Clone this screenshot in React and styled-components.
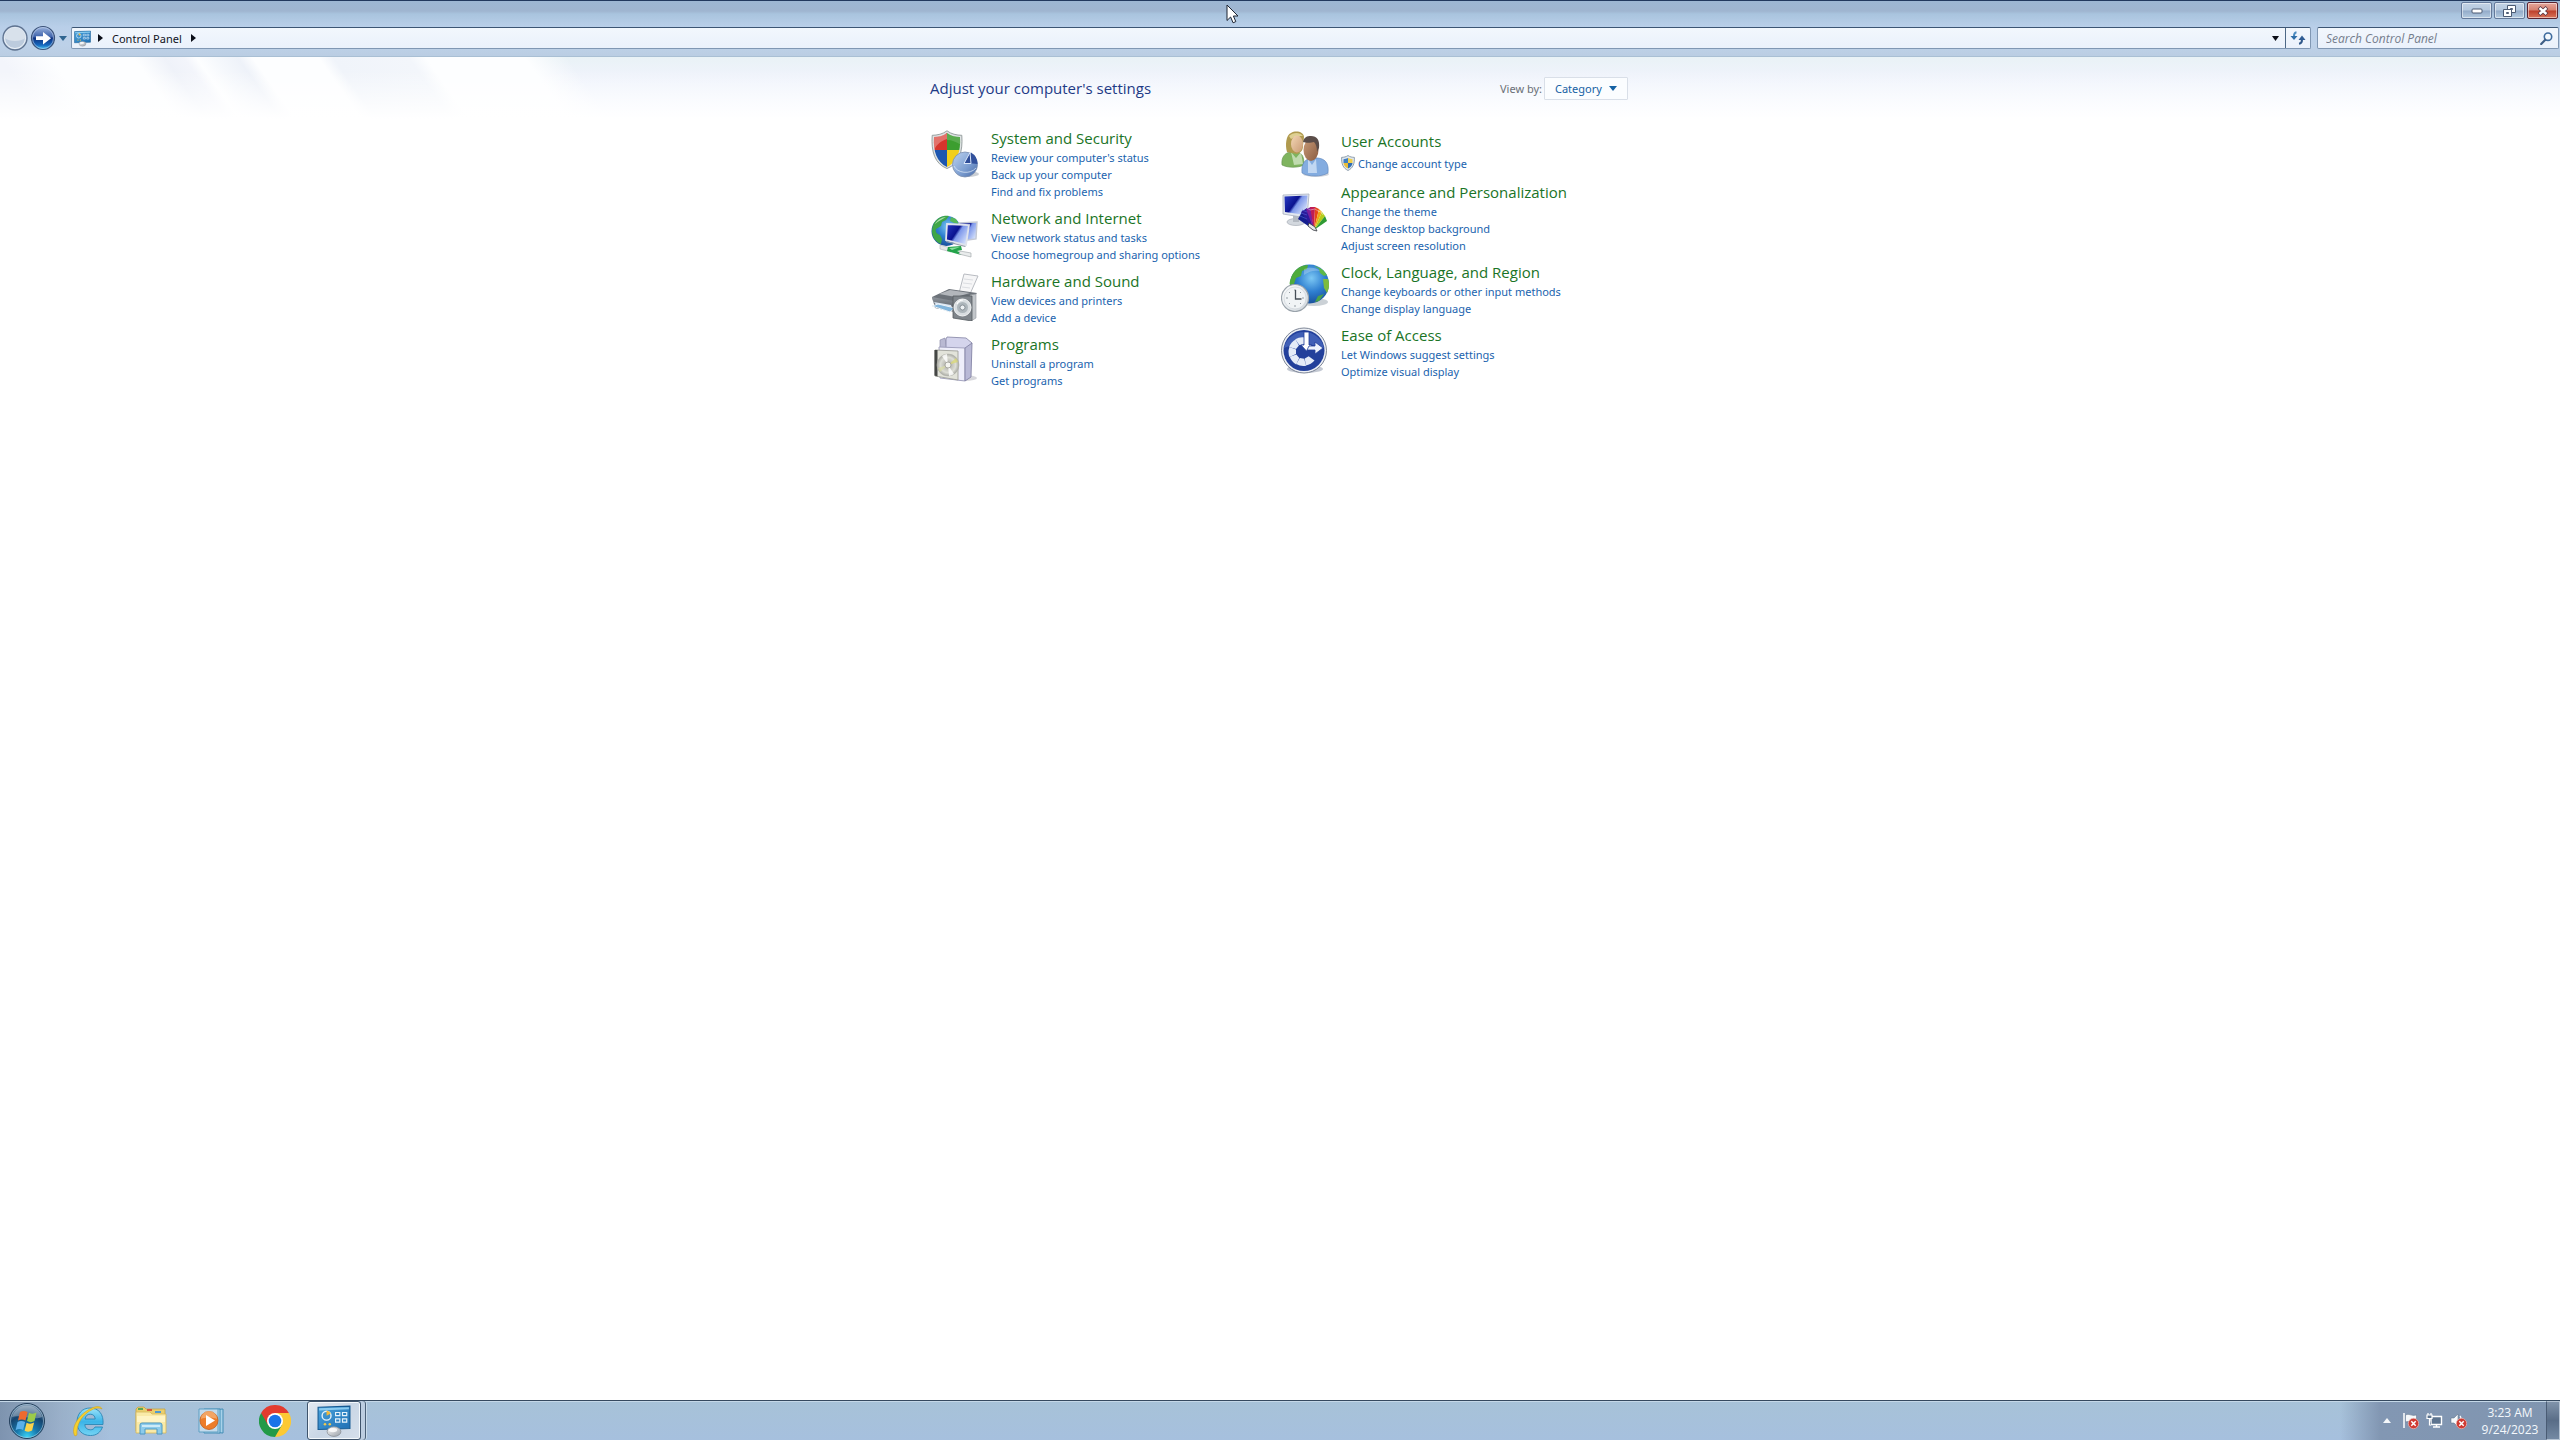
import React from "react";
import styled, { createGlobalStyle, css } from "styled-components";

const GlobalStyle = createGlobalStyle`
  *, *::before, *::after {
    box-sizing: border-box;
  }

  body {
    margin: 0;
    background: #ffffff;
    font-family: "Noto Sans", "Open Sans", sans-serif;
    font-size: 11px;
    line-height: 17px;
  }

  svg {
    display: block;
    flex: none;
  }

  button, input, select {
    font: inherit;
    margin: 0;
  }
`;

const Desktop = styled.div`
  min-height: 100vh;
  display: flex;
  flex-direction: column;
`;

/* window frame */

const Frame = styled.header`
  border-top: 1px solid #22395e;
  border-bottom: 1px solid #a9bfd4;
  background: linear-gradient(
    to bottom,
    #9db7d3 0,
    #9fb5d0 10px,
    #a9c4de 13px,
    #b9cfe9 26px,
    #bdd1e8 44px,
    #bacde2 56px
  );
`;

const CaptionBar = styled.div`
  display: flex;
  justify-content: flex-end;
  gap: 2px;
  padding: 1px 2px 0;
  height: 25px;
`;

const CaptionButton = styled.button`
  width: 31px;
  height: 17px;
  padding: 0;
  display: flex;
  align-items: center;
  justify-content: center;
  border: 1px solid #64799a;
  border-radius: 2px;
  box-shadow: inset 0 0 0 1px rgba(255, 255, 255, 0.5);
  background: linear-gradient(to bottom, #c3d3e5 0%, #b4c8de 48%, #93abc9 52%, #b4cbe0 100%);

  ${(p) =>
    p.$close &&
    css`
      border-color: #5b2330;
      background: linear-gradient(to bottom, #e5a69b 0%, #d5806f 48%, #bd3f2b 52%, #d9745a 100%);
    `}
`;

const NavRow = styled.div`
  display: flex;
  align-items: center;
  padding: 0 1px 6px 2px;
  height: 30px;
`;

const RoundButton = styled.button`
  padding: 0;
  border: 0;
  background: none;
  margin-right: ${(p) => p.$gap || 0}px;
`;

const AddressBar = styled.nav`
  flex: 1;
  height: 22px;
  display: flex;
  align-items: center;
  margin-right: 6px;
  border: 1px solid #8097b3;
  border-top-color: #3c5573;
  border-radius: 2px;
  background: linear-gradient(to bottom, #f2f7fd, #eaf1fb);
`;

const Crumb = styled.a`
  display: flex;
  align-items: center;
  margin: 0 9px;
  color: #10131c;
  text-decoration: none;
`;

const BarIcon = styled.span`
  padding: 0 7px 0 2px;
`;

const Spacer = styled.div`
  flex: 1;
`;

const BarButton = styled.button`
  width: ${(p) => p.$w}px;
  height: 20px;
  padding: 0;
  display: flex;
  align-items: center;
  justify-content: center;
  border: 0;
  border-left: ${(p) => (p.$divided ? "1px solid #4d6886" : "0")};
  background: none;
`;

const SearchBox = styled.label`
  width: 242px;
  height: 22px;
  display: flex;
  align-items: center;
  padding: 0 5px 0 8px;
  border: 1px solid #8097b3;
  border-top-color: #3c5573;
  border-radius: 2px;
  background: linear-gradient(to bottom, #f2f7fd, #eaf1fb);
`;

const SearchInput = styled.input`
  flex: 1;
  min-width: 0;
  padding: 0;
  border: 0;
  outline: 0;
  background: none;
  font-family: "Open Sans", "Noto Sans", sans-serif;
  font-size: 12px;

  &::placeholder {
    color: #757d8c;
    font-style: italic;
    opacity: 1;
  }
`;

/* content */

const Content = styled.main`
  flex: 1;
  padding-top: 18px;
  background:
    linear-gradient(to bottom, transparent 0, transparent 14px, #ffffff 62px),
    linear-gradient(
      55deg,
      #f3f5fb 36px,
      #fdfeff 77px,
      #fdfeff 145px,
      #eff2f9 170px,
      #f3f5fb 186px,
      #fdfeff 196px,
      #f5f8fc 212px,
      #eef2f9 230px,
      #fdfeff 242px,
      #fdfeff 296px,
      #f0f4fa 308px,
      #f3f6fb 370px,
      #fdfeff 384px,
      #fdfeff 465px,
      rgba(253, 254, 255, 0) 500px
    ) 0 0 / 700px 62px no-repeat,
    linear-gradient(to bottom, #e9f2f6 0, #eff3fb 18px, #f4f8ff 62px);
`;

const Panel = styled.div`
  width: 100%;
  max-width: 700px;
  margin: 0 auto;
`;

const PanelHead = styled.div`
  display: flex;
  align-items: center;
  justify-content: space-between;
  height: 26px;
  margin-bottom: 27px;
  padding-right: 2px;
`;

const PanelTitle = styled.h1`
  margin: 0;
  font-family: "Open Sans", "Noto Sans", sans-serif;
  font-size: 15px;
  line-height: 22px;
  font-weight: 400;
  color: #1e3a86;
`;

const ViewBy = styled.label`
  display: flex;
  align-items: center;
  gap: 2px;
  color: #6a6f76;
`;

const SelectWrap = styled.span`
  position: relative;
  display: flex;
  align-items: center;

  svg {
    position: absolute;
    right: 11px;
    pointer-events: none;
  }
`;

const Select = styled.select`
  appearance: none;
  width: 84px;
  height: 23px;
  padding: 0 0 0 10px;
  border: 1px solid #d9dfe8;
  border-radius: 1px;
  background: #fbfdff;
  color: #1561a3;
`;

const Columns = styled.div`
  display: grid;
  grid-template-columns: 1fr 1fr;
`;

const Category = styled.section`
  display: flex;
  gap: 12px;
  padding: 0 0 ${(p) => (p.$shielded ? 4 : 8)}px 1px;
`;

const CategoryIcon = styled.div`
  padding-top: 2px;
`;

const CategoryBody = styled.div`
  padding-top: ${(p) => (p.$shielded ? 3 : 0)}px;
`;

const CategoryTitle = styled.h2`
  margin: 0;
  font-family: "Open Sans", "Noto Sans", sans-serif;
  font-size: 15px;
  line-height: 21px;
  font-weight: 400;
  white-space: nowrap;

  a {
    color: #1a7426;
    text-decoration: none;
  }
`;

const TaskList = styled.ul`
  margin: 0;
  padding: 0;
  list-style: none;
`;

const Task = styled.li`
  display: flex;
  align-items: center;
  gap: 3px;
  height: ${(p) => (p.$shielded ? 22 : 17)}px;
  white-space: nowrap;

  a {
    color: #1a63ae;
    text-decoration: none;
  }
`;

/* taskbar */

const Taskbar = styled.footer`
  height: 40px;
  display: flex;
  align-items: stretch;
  border-top: 1px solid #35495f;
  box-shadow: inset 0 1px 0 #c5d8e8;
  background:
    linear-gradient(to right, rgba(112, 132, 160, 0.75) 0, rgba(140, 158, 184, 0.5) 60px, transparent 110px),
    linear-gradient(to left, #8095b0 0, #8297b3 180px, transparent 220px),
    linear-gradient(to bottom, #a7c2d8, #a6c0de);
`;

const StartButton = styled.button`
  width: 54px;
  margin-right: 5px;
  padding: 0;
  border: 0;
  background: none;
  display: flex;
  align-items: center;
  justify-content: center;
`;

const TaskButtons = styled.div`
  display: flex;
  flex: 1;
  gap: 2px;
`;

const TaskButton = styled.button`
  width: 60px;
  padding: 0;
  border: 0;
  background: none;
  display: flex;
  align-items: center;
  justify-content: center;

  ${(p) =>
    p.$active &&
    css`
      width: 54px;
      border: 1px solid #3f546c;
      border-radius: 3px;
      box-shadow:
        inset 0 0 0 1px #f3f8fc,
        4px 0 0 #bccde0,
        5px 0 0 #4a6078,
        6px 0 0 #c9dbea;
      background: linear-gradient(135deg, #e3eaf2 0%, #c9d6e5 50%, #d5dfeb 100%);
    `}
`;

const Tray = styled.div`
  display: flex;
  align-items: center;
  gap: 7px;
`;

const TrayButton = styled.button`
  padding: 0;
  border: 0;
  background: none;
  margin-right: ${(p) => p.$gap || 0}px;
`;

const Clock = styled.time`
  width: 72px;
  font-family: "Open Sans", "Noto Sans", sans-serif;
  font-size: 12px;
  text-align: center;
  color: #f4f8fc;

  span {
    display: block;
  }
`;

const ShowDesktop = styled.button`
  width: 14px;
  padding: 0;
  border: 1px solid #b5c3d3;
  border-left-color: #4a5c74;
  background: linear-gradient(to bottom, #8093aa, #596d87 50%, #7489a3);
`;

const Pointer = styled.div`
  position: absolute;
  top: 4px;
  left: 48%;
  margin-left: -3px;
  pointer-events: none;
`;

/* icons */

const Defs = () => (
  <svg width="0" height="0" style={{ position: "absolute" }} aria-hidden="true">
    <defs>
      <radialGradient id="ocean" cx="0.55" cy="0.35" r="0.7">
        <stop offset="0" stopColor="#7cc8f4" />
        <stop offset="0.5" stopColor="#2f7fd0" />
        <stop offset="1" stopColor="#154a94" />
      </radialGradient>
      <linearGradient id="screen" x1="0" y1="0" x2="1" y2="0.6">
        <stop offset="0" stopColor="#2a3cc4" />
        <stop offset="0.5" stopColor="#0a128f" />
        <stop offset="0.6" stopColor="#7d97ea" />
        <stop offset="1" stopColor="#cfdcfa" />
      </linearGradient>
      <linearGradient id="steel" x1="0" y1="0" x2="1" y2="1">
        <stop offset="0" stopColor="#fafafa" />
        <stop offset="1" stopColor="#9aa0a8" />
      </linearGradient>
      <linearGradient id="grey" x1="0" y1="0" x2="0" y2="1">
        <stop offset="0" stopColor="#8f959c" />
        <stop offset="1" stopColor="#4b5159" />
      </linearGradient>
      <linearGradient id="dial" x1="0" y1="0" x2="1" y2="1">
        <stop offset="0" stopColor="#ffffff" />
        <stop offset="1" stopColor="#cfd6dc" />
      </linearGradient>
      <linearGradient id="skin" x1="0" y1="0" x2="1" y2="1">
        <stop offset="0" stopColor="#f3d6b4" />
        <stop offset="1" stopColor="#c89a74" />
      </linearGradient>
      <linearGradient id="skinDark" x1="0" y1="0" x2="1" y2="1">
        <stop offset="0" stopColor="#c89a77" />
        <stop offset="1" stopColor="#8a5c41" />
      </linearGradient>
      <radialGradient id="disc" cx="0.5" cy="0.5" r="0.5">
        <stop offset="0" stopColor="#ffffff" />
        <stop offset="0.3" stopColor="#bdbdb6" />
        <stop offset="0.7" stopColor="#dddeD6" />
        <stop offset="1" stopColor="#a9aaa4" />
      </radialGradient>
      <linearGradient id="panelBlue" x1="0" y1="0" x2="1" y2="1">
        <stop offset="0" stopColor="#4aa3dc" />
        <stop offset="1" stopColor="#1f6fb4" />
      </linearGradient>
    </defs>
  </svg>
);

const Svg48 = ({ children }) => (
  <svg width="48" height="48" viewBox="0 0 48 48" aria-hidden="true">
    {children}
  </svg>
);

const SecurityIcon = () => (
  <Svg48>
    <defs>
      <clipPath id="bigShield">
        <path d="M16 3C12 6 7 7 3 7c-1 15 3 25 13 30 10-5 14-15 13-30-4 0-9-1-13-4z" />
      </clipPath>
      <linearGradient id="pie" x1="0" y1="0" x2="1" y2="1">
        <stop offset="0" stopColor="#bdd3f0" />
        <stop offset="0.6" stopColor="#7b9dd0" />
        <stop offset="1" stopColor="#4668a6" />
      </linearGradient>
    </defs>
    <path d="M16 0.8C12 4 6 5.300 1.200 5.300 0 22 4 34 16 38.500 28 34 32 22 30.800 5.300 26 5.300 20 4 16 0.8z" fill="#dfe3e4" stroke="#8f9797" strokeWidth="0.9" />
    <g clipPath="url(#bigShield)">
      <rect width="16" height="20" fill="#d6362c" />
      <rect x="16" width="16" height="20" fill="#3c9e2f" />
      <rect y="20" width="16" height="20" fill="#1e57b0" />
      <rect x="16" y="20" width="16" height="20" fill="#f2cf1d" />
      <path d="M2 4h14v5C10 11 6 14 3 20z" fill="#fff" opacity="0.3" />
      <path d="M16 3c5 4 9 4 14 4v8c-4-3-9-5-14-5z" fill="#fff" opacity="0.15" />
    </g>
    <ellipse cx="37" cy="44" rx="11" ry="3" fill="#98a0aa" opacity="0.5" />
    <circle cx="34" cy="34.500" r="12.500" fill="url(#pie)" stroke="#7c8fb0" strokeWidth="0.8" />
    <path d="M36 33L40 22.500A13 13 0 0 1 46.500 34z" fill="#32519c" />
    <path d="M33 33.500L39 22.500l1 11z" fill="#2e4d98" stroke="#dce8fa" strokeWidth="1" />
    <path d="M23 36c3 7 16 9 22 2" fill="none" stroke="#e3edf9" strokeWidth="1" opacity="0.7" />
  </Svg48>
);

const NetworkIcon = () => (
  <Svg48>
    <g transform="translate(0 2)">
      <circle cx="15.500" cy="19" r="15" fill="url(#ocean)" />
      <path d="M3 11c4-6 10-8 15-7l-3 4-4 2-1 4-5 3c-1 3 1 5 4 6l2 4-1 5C4 30 1 24 1 19c0-3 1-6 2-8z" fill="#3fa648" />
      <path d="M20 5l5 2 3 5-5-1-4-2z" fill="#57b85b" />
      <path d="M4 12c2-4 7-7 11-7-3 2-8 4-11 7z" fill="#d5f2d3" opacity="0.7" />
      <path d="M28 11l18-1-1 17-15 2z" fill="url(#screen)" stroke="#c3c8d4" strokeWidth="1.400" />
      <path d="M16 12l22 1-3 20-20-5z" fill="url(#screen)" stroke="#dfe3ec" strokeWidth="1.800" />
      <path d="M15 29l20 5-1 1-19-5z" fill="#9aa1ad" />
      <path d="M9 33l11 3v4L9 37z" fill="#e5e7e8" stroke="#adb3b5" strokeWidth="0.6" />
      <path d="M17 35l13-1 1 4-5 1 5 2-1 2-14-4z" fill="#23a34a" />
      <path d="M18 36l11-1-8 3z" fill="#8ce09f" />
      <path d="M29 39l11 2v4l-12-3z" fill="#e9ecec" stroke="#a7adb0" strokeWidth="0.7" />
    </g>
  </Svg48>
);

const HardwareIcon = () => (
  <Svg48>
    <path d="M28 20l5-19 14 2-8 18z" fill="#f6f6f7" stroke="#b9bcc2" strokeWidth="1" />
    <path d="M33 6l9 1M32 10l9 1M31 14l8 1" stroke="#dcdee2" strokeWidth="1" />
    <path d="M1 24l17-8 28 4-4 5-18 6-22-3z" fill="#6c7279" />
    <path d="M8 21l11-4 20 3-14 4z" fill="#b2b6bb" />
    <path d="M1 24l22 4 1 11-20-4z" fill="url(#grey)" />
    <path d="M3 29l17 3 1 3-15-2z" fill="#dbe7f4" />
    <path d="M1 33l6-2 17 4-5 4z" fill="#82b5dc" stroke="#ecf2f7" strokeWidth="1" />
    <path d="M39 22l6-1v24l-5 3z" fill="#c2c6ca" stroke="#94999e" strokeWidth="0.6" />
    <path d="M22 23h19v25l-19-3z" fill="#7f858b" stroke="#565c61" strokeWidth="0.8" />
    <circle cx="31.500" cy="34.500" r="8.500" fill="#d8dde0" stroke="#f3f5f6" strokeWidth="1" />
    <circle cx="31.500" cy="34.500" r="5.500" fill="#adb6bb" />
    <circle cx="31.500" cy="34.500" r="2.500" fill="#edf1f3" stroke="#778087" strokeWidth="0.8" />
    <path d="M26 31a7 7 0 0 1 6-4" fill="none" stroke="#fff" strokeWidth="1.200" />
  </Svg48>
);

const ProgramsIcon = () => (
  <Svg48>
    <ellipse cx="34" cy="42" rx="12" ry="3" fill="#9a9aa8" opacity="0.4" />
    <path d="M9 4l5-2 2 11-7-1z" fill="#b9b9d2" stroke="#8d8daa" strokeWidth="0.7" />
    <path d="M15 3l1-2 19 1 6 5-5 6-21-1z" fill="#d4d4ec" stroke="#8d8dac" strokeWidth="0.9" />
    <path d="M8 11l26 1v33l-25-3z" fill="#eeeefa" stroke="#9c9cba" strokeWidth="0.9" />
    <path d="M34 12l7-5-1 34-6 4z" fill="#b9b9d6" stroke="#8484a6" strokeWidth="0.9" />
    <path d="M4 14l23 1v29L4 40z" fill="#e2e3da" stroke="#9fa09a" strokeWidth="0.9" />
    <path d="M3.500 14h3v26.500l-3-1z" fill="#454745" />
    <circle cx="17" cy="29" r="11" fill="url(#disc)" stroke="#b2b2a9" strokeWidth="0.6" />
    <path d="M17 29l-6-9a11 11 0 0 1 5-2z" fill="#fff" opacity="0.8" />
    <path d="M17 29l6 9a11 11 0 0 1-5 2z" fill="#fff" opacity="0.8" />
    <path d="M17 29l8-7a11 11 0 0 1 2 4z" fill="#dcd86e" opacity="0.7" />
    <path d="M17 29l-8 7a11 11 0 0 1-2-4z" fill="#d9dba4" opacity="0.7" />
    <circle cx="17" cy="29" r="3" fill="#f4f4ef" stroke="#9b9b94" strokeWidth="0.8" />
  </Svg48>
);

const UsersIcon = () => (
  <Svg48>
    <path d="M1 35c-1-8 3-12 8-13h8c5 2 6 6 6 13-6 3-16 3-22 0z" fill="#7fb45f" stroke="#5f8f49" strokeWidth="0.6" />
    <path d="M10 22l5 6 5-6 2 12-9 1z" fill="#dcebd2" opacity="0.7" />
    <path d="M6 22C4 15 5 5 10 3c5-3 13-1 13 4l-1 9c0 5-3 7-6 8z" fill="#b09a4e" />
    <path d="M8 6c4-4 11-4 14 0-4 0-8 0-12 3z" fill="#ded092" />
    <ellipse cx="16" cy="14" rx="6" ry="8.500" fill="url(#skin)" />
    <ellipse cx="35" cy="44" rx="13" ry="3" fill="#8b97a8" opacity="0.4" />
    <path d="M21 43c-1-9 3-14 9-15h7c8 1 11 6 10 15-7 4-19 4-26 0z" fill="#83ace0" stroke="#5d83b8" strokeWidth="0.6" />
    <path d="M27 29l4 6 4-6 1 14h-9z" fill="#dce9fa" opacity="0.7" />
    <ellipse cx="30" cy="20" rx="7.500" ry="11" fill="url(#skinDark)" />
    <path d="M22 12c1-5 4-6 8-6 6 0 9 4 8 12l-2 4c0-5-1-8-3-10-3 1-8 1-11 0z" fill="#5b4d49" />
  </Svg48>
);

const AppearanceIcon = () => (
  <Svg48>
    <g transform="translate(0 9)">
      <ellipse cx="15" cy="29" rx="9" ry="3.500" fill="#d3d8de" stroke="#a8aeb6" strokeWidth="0.7" />
      <path d="M12 22h6v7h-6z" fill="#b4bac2" />
      <path d="M2 2l26-1-2 24-24-4z" fill="#e2e7ef" stroke="#a8b0bf" strokeWidth="0.8" />
      <path d="M3.500 3.500l23-1L25 22 4 19z" fill="url(#screen)" />
      <path d="M33 37L17 26l5-9z" fill="#131d8e" />
      <path d="M33 37L20 19l6-4z" fill="#2b1a9a" />
      <path d="M33 37L25 16l5-2z" fill="#7a1f9c" />
      <path d="M33 37l-4-23 5 0z" fill="#c01c52" />
      <path d="M33 37l1-23 4 2z" fill="#e5441a" />
      <path d="M33 37l5-21 3 3z" fill="#f0a414" />
      <path d="M33 37l8-18 3 4z" fill="#b5cc18" />
      <path d="M33 37l11-14 2 5z" fill="#2f9a33" />
      <path d="M21 17l5 2M20 20l6 2M19 23l7 3" stroke="#5060d8" strokeWidth="0.6" />
      <path d="M26 15l3 2 5-1 3 2 3 1 2 3" fill="none" stroke="#fff" strokeWidth="0.6" opacity="0.7" />
      <path d="M28 30l6 4 2 4-4-1-5-4z" fill="#e8e9eb" stroke="#33363d" strokeWidth="0.8" />
    </g>
  </Svg48>
);

const ClockIcon = () => (
  <Svg48>
    <ellipse cx="33" cy="38" rx="14" ry="4" fill="#97a4ae" opacity="0.5" />
    <circle cx="28.500" cy="20" r="19.500" fill="url(#ocean)" />
    <path d="M10 14C13 5 20 1 27 1l-1 4-5 2-1 5-5 2-2 6-4 1c-1-2 0-4 1-7z" fill="#4eab3c" />
    <path d="M33 2c6 1 10 4 13 9l-3 1-4-3-1-4z" fill="#5cb848" />
    <path d="M42 15l5 0c2 5 1 10-1 14l-3-5z" fill="#7dbb3f" />
    <path d="M37 32l6-2-5 7-4 1z" fill="#4aa24a" />
    <path d="M23 5c5-2 12-2 16 2-6-1-11 0-16 4z" fill="#fff" opacity="0.25" />
    <circle cx="14" cy="34" r="13.500" fill="url(#dial)" stroke="#9aa3ab" strokeWidth="1.200" />
    <circle cx="14" cy="34" r="11" fill="#f1f4f6" stroke="#c9d0d6" strokeWidth="0.6" />
    <path d="M14 25v2M14 41v2M5 34h2M21 34h2M8 28l1 1M20 28l-1 1M8 40l1-1M20 40l-1-1" stroke="#8a939b" strokeWidth="0.9" />
    <path d="M14.500 26v9h6" fill="none" stroke="#454e57" strokeWidth="1.300" />
  </Svg48>
);

const EaseIcon = () => {
  const blades = [60, 100, 140, 180, 220, 260];
  return (
    <Svg48>
      <ellipse cx="24" cy="42" rx="18" ry="4" fill="#8a93a8" opacity="0.5" />
      <circle cx="23" cy="23.500" r="22.500" fill="#eceff4" stroke="#727a8c" strokeWidth="0.9" />
      <circle cx="23" cy="23.500" r="20.500" fill="#23409b" />
      <path d="M3 21a20.500 20.500 0 0 1 40 0c-12-5-28-5-40 0z" fill="#5474c8" opacity="0.6" />
      {blades.map((a) => (
        <path
          key={a}
          d="M29 22l6.500-3a14 14 0 0 1 0 10L29 26.500z"
          fill="#e4ebf7"
          transform={`rotate(${a} 22 24.500)`}
        />
      ))}
      <path d="M23 5h5v13h3l-5.500 6-5.500-6h3z" fill="#fff" stroke="#23409b" strokeWidth="0.8" />
      <path d="M28 19h6v-4l8 6-8 6v-4h-8z" fill="#eef3fc" stroke="#23409b" strokeWidth="0.8" />
    </Svg48>
  );
};

const ShieldSmall = () => (
  <svg width="14" height="16" viewBox="0 0 14 16" aria-hidden="true">
    <path d="M7 .5C5 2 3 2.200.6 2.400.4 9 2 13 7 15.500 12 13 13.600 9 13.400 2.400 11 2.200 9 2 7 .5z" fill="#dfe6ec" stroke="#8797a6" strokeWidth="0.9" />
    <path d="M7 3v5H2.500V4.200C4 4 5.500 3.700 7 3z" fill="#3f7fc4" />
    <path d="M7 3v5h4.500V4.200C10 4 8.500 3.700 7 3z" fill="#f1cf4b" />
    <path d="M7 8v5.500c-2.700-1.300-4.200-3-4.500-5.500z" fill="#e9bd38" />
    <path d="M7 8v5.500c2.700-1.300 4.200-3 4.500-5.500z" fill="#2f6db4" />
  </svg>
);

const PanelGlyph = ({ size }) => (
  <svg width={size} height={size} viewBox="0 0 32 32" aria-hidden="true">
    <path d="M1 3l30-1v21l-30 1z" fill="url(#panelBlue)" stroke="#155a92" strokeWidth="1" />
    <path d="M2 4l28-1v2L2 6z" fill="#8accf0" />
    <circle cx="9" cy="11" r="4.200" fill="none" stroke="#e5f2fb" strokeWidth="1.300" />
    <path d="M9 11V6a5 5 0 0 1 4 3z" fill="#f1b83c" />
    <path d="M17.500 8h4v3h-4zM24 8h4v3h-4zM17.500 14h4v3h-4zM24 14h4v3h-4z" fill="#2b82c4" stroke="#e5f2fb" strokeWidth="1.100" />
    <circle cx="7.500" cy="19" r="1.200" fill="#f1c84c" />
    <circle cx="12" cy="19" r="1.200" fill="#f1c84c" />
    <ellipse cx="16" cy="26" rx="6.500" ry="4.500" fill="url(#steel)" stroke="#858b92" strokeWidth="0.7" />
    <ellipse cx="15" cy="24.500" rx="4" ry="2" fill="#fff" opacity="0.8" />
  </svg>
);

const BackGlyph = () => (
  <svg width="26" height="26" viewBox="0 0 26 26" aria-hidden="true">
    <circle cx="13" cy="13" r="12" fill="#bccbdd" stroke="#5f7390" strokeWidth="1.300" />
    <circle cx="13" cy="13" r="10.500" fill="none" stroke="#eef3f9" strokeWidth="1" />
    <path d="M2.500 13a10.500 10.500 0 0 1 21 0c-5 4-16 4-21 0z" fill="#d8e1eb" />
  </svg>
);

const ForwardGlyph = () => (
  <svg width="26" height="26" viewBox="0 0 26 26" aria-hidden="true">
    <defs>
      <linearGradient id="fwd" x1="0" y1="0" x2="0" y2="1">
        <stop offset="0" stopColor="#9db5de" />
        <stop offset="0.45" stopColor="#3f63ab" />
        <stop offset="0.5" stopColor="#0c2f7d" />
        <stop offset="0.8" stopColor="#1566bd" />
        <stop offset="1" stopColor="#44c8f5" />
      </linearGradient>
    </defs>
    <circle cx="13" cy="13" r="11.500" fill="url(#fwd)" stroke="#3c5379" strokeWidth="1.200" />
    <circle cx="13" cy="13" r="10.500" fill="none" stroke="#c5d6ee" strokeWidth="0.8" opacity="0.7" />
    <path d="M6 11.200h7V7l8 6.200-8 6.200v-4.400H6z" fill="#fff" />
  </svg>
);

const RightTick = () => (
  <svg width="5" height="8" viewBox="0 0 5 8" aria-hidden="true">
    <path d="M0 0l5 4-5 4z" fill="#0b0e18" />
  </svg>
);

const DownTick = ({ color, size = 8 }) => (
  <svg width={size} height="5" viewBox="0 0 8 5" preserveAspectRatio="none" aria-hidden="true">
    <path d="M0 0h8L4 5z" fill={color} />
  </svg>
);

const RefreshGlyph = () => (
  <svg width="16" height="14" viewBox="0 0 16 14" aria-hidden="true">
    <path d="M6.500 1.200C4.500 1.500 4 3 4 5v1" fill="none" stroke="#4b8bc0" strokeWidth="2" />
    <path d="M.5 5h7L4 9z" fill="#2f6ea8" />
    <path d="M9 12.800c2.500-.3 3-1.800 3-4V8" fill="none" stroke="#30588a" strokeWidth="2" />
    <path d="M8.500 9h7L12 4.500z" fill="#2f5d94" />
  </svg>
);

const SearchGlyph = () => (
  <svg width="13" height="13" viewBox="0 0 13 13" aria-hidden="true">
    <circle cx="8" cy="4.700" r="3.700" fill="#f4f9fd" stroke="#3f6c9e" strokeWidth="1.600" />
    <path d="M5.300 7.700L1.200 12" stroke="#3f5f86" strokeWidth="2.200" strokeLinecap="round" />
  </svg>
);

const StartOrb = () => (
  <svg width="38" height="38" viewBox="0 0 38 38" aria-hidden="true">
    <defs>
      <radialGradient id="orb" cx="0.5" cy="0.95" r="0.9">
        <stop offset="0" stopColor="#38d2f4" />
        <stop offset="0.35" stopColor="#1878ac" />
        <stop offset="0.7" stopColor="#16446e" />
        <stop offset="1" stopColor="#7390ac" />
      </radialGradient>
    </defs>
    <circle cx="19" cy="19" r="17.500" fill="url(#orb)" stroke="#24405c" strokeWidth="1" />
    <circle cx="19" cy="19" r="16.500" fill="none" stroke="#b5d0e2" strokeWidth="0.8" opacity="0.7" />
    <path d="M4 15a15.500 15.500 0 0 1 30 0C26 19 12 12 4 15z" fill="#fff" opacity="0.3" />
    <path d="M12 10c2.500-1.500 5-1.300 7.500 0l-2 8.500c-2.500-1.300-5-1.500-7.500 0z" fill="#ee6a2f" />
    <path d="M21 10.800c2.500 1.300 5 1.300 7.500-.2l-2 8.500c-2.500 1.500-5 1.300-7.500 0z" fill="#9bcb4a" />
    <path d="M9.600 20c2.500-1.500 5-1.300 7.500 0l-2 8c-2.500-1.300-5-1.300-7.500.2z" fill="#5cb0ea" />
    <path d="M18.600 20.700c2.500 1.300 5 1.300 7.500-.1l-2 8c-2.500 1.500-5 1.300-7.500.1z" fill="#fbd34b" />
  </svg>
);

const IeIcon = () => (
  <svg width="34" height="32" viewBox="0 0 34 32" aria-hidden="true">
    <defs>
      <linearGradient id="ie" x1="0" y1="0" x2="0" y2="1">
        <stop offset="0" stopColor="#9be3fa" />
        <stop offset="0.5" stopColor="#3bb4e8" />
        <stop offset="1" stopColor="#74d4f4" />
      </linearGradient>
    </defs>
    <path
      d="M18 3C10 3 5 9 5 17s5 13.500 13.500 13.500c6 0 10-3 12-8.500h-7.500c-1 2-2.500 2.800-4.600 2.800-3.500 0-5.400-2-5.600-5.300H31C32 9 26.500 3 18 3zM13 14c.5-3 2.300-4.800 5.200-4.800 3 0 4.800 1.800 5 4.800z"
      fill="url(#ie)"
      stroke="#2b87b6"
      strokeWidth="0.9"
      fillRule="evenodd"
    />
    <path d="M3 31C-2 24 6 9 20 3c5-2 9-2 10 1-3-1.500-6-1-9 .3C10 9 4 20 5 30z" fill="#f6cf2e" stroke="#c79b1c" strokeWidth="0.5" />
  </svg>
);

const ExplorerIcon = () => (
  <svg width="32" height="30" viewBox="0 0 32 30" aria-hidden="true">
    <path d="M1 3l2-2h6l2 2h19v22H1z" fill="#e9cf6e" stroke="#c5a547" strokeWidth="0.8" />
    <path d="M3 2h5v2H3z" fill="#5aa653" />
    <path d="M12 3h5v2h-5z" fill="#d4573c" />
    <path d="M20 5h6v2h-6z" fill="#4e9ad1" />
    <path d="M1 6h14l2 2h14v19H1z" fill="#f9eaa8" stroke="#d5b85c" strokeWidth="0.8" />
    <path d="M2 10h28v6H2z" fill="#fff6cc" opacity="0.8" />
    <path d="M5 28V19q0-2 2-2h18q2 0 2 2v9h-5v-5H10v5z" fill="#8ccbea" stroke="#4d98c4" strokeWidth="1" />
    <path d="M7 20h18" stroke="#e2f5fd" strokeWidth="1.500" />
  </svg>
);

const MediaIcon = () => (
  <svg width="30" height="28" viewBox="0 0 30 28" aria-hidden="true">
    <path d="M10 3l15-1v24l-15-1z" fill="#a7d2ea" stroke="#428db5" strokeWidth="1" />
    <path d="M6 2h16v24H6z" fill="#b5daee" stroke="#428db5" strokeWidth="1" />
    <path d="M1 2h19v23H1z" fill="#c3dbec" stroke="#5c9fc3" strokeWidth="1" />
    <circle cx="11" cy="13.500" r="9" fill="#ec7d2b" stroke="#c45d19" strokeWidth="0.8" />
    <path d="M3 12a8 8 0 0 1 16 0c-4-2-12-2-16 0z" fill="#f8b67c" opacity="0.7" />
    <path d="M8 8l9 5.500L8 19z" fill="#fff" />
  </svg>
);

const ChromeIcon = () => (
  <svg width="32" height="32" viewBox="0 0 32 32" aria-hidden="true">
    <path d="M16 16V8h13.860A16 16 0 0 1 16 32z" fill="#fcc934" />
    <path d="M16 16l6.930 4L16 32A16 16 0 0 1 2.140 8z" fill="#229a48" />
    <path d="M2.140 8L9.070 20 16 16V8h13.860A16 16 0 0 0 2.140 8z" fill="#e33b2e" />
    <circle cx="16" cy="16" r="8" fill="#fff" />
    <circle cx="16" cy="16" r="6.300" fill="#1a73e8" />
  </svg>
);

const ErrorBadge = () => (
  <g>
    <circle cx="11.500" cy="11.500" r="5.200" fill="#cf3b33" stroke="#efb8b2" strokeWidth="0.7" />
    <path d="M9.300 9.300l4.400 4.400M13.700 9.300l-4.400 4.400" stroke="#fff" strokeWidth="1.500" />
  </g>
);

const FlagIcon = () => (
  <svg width="17" height="18" viewBox="0 0 17 18" aria-hidden="true">
    <path d="M2 1v15" stroke="#fff" strokeWidth="1.500" />
    <path d="M3.500 3c4-2 5 1.500 11 0v7c-5 1.500-7-1.500-11 0z" fill="#f5f8fb" stroke="#5b6c82" strokeWidth="0.5" />
    <ErrorBadge />
  </svg>
);

const NetTrayIcon = () => (
  <svg width="17" height="18" viewBox="0 0 17 18" aria-hidden="true">
    <path d="M5 4.500h10.500v8H5z" fill="#5d748f" stroke="#fff" strokeWidth="1.400" />
    <path d="M7 15h7M10.500 12.500v2" stroke="#fff" strokeWidth="1.500" />
    <path d="M1 3h5v3.500H1zM2 1v2M5 1v2M3.500 6v7H5" fill="#5d748f" stroke="#fff" strokeWidth="1.200" />
  </svg>
);

const SoundIcon = () => (
  <svg width="17" height="18" viewBox="0 0 17 18" aria-hidden="true">
    <path d="M1 6h3l4-4v13l-4-4H1z" fill="#f5f8fb" stroke="#5b6c82" strokeWidth="0.5" />
    <path d="M10 4c1 1 1 2 1 3" fill="none" stroke="#fff" strokeWidth="1.200" />
    <ErrorBadge />
  </svg>
);

const CursorGlyph = () => (
  <svg width="14" height="21" viewBox="0 0 14 21" aria-hidden="true">
    <path d="M1 1v15.500l3.600-3.500 2.500 5.800 2.700-1.200L7.400 12H12z" fill="#fff" stroke="#1b2230" strokeWidth="1" />
  </svg>
);

/* data */

const leftColumn = [
  {
    title: "System and Security",
    Icon: SecurityIcon,
    tasks: ["Review your computer's status", "Back up your computer", "Find and fix problems"],
  },
  {
    title: "Network and Internet",
    Icon: NetworkIcon,
    tasks: ["View network status and tasks", "Choose homegroup and sharing options"],
  },
  {
    title: "Hardware and Sound",
    Icon: HardwareIcon,
    tasks: ["View devices and printers", "Add a device"],
  },
  {
    title: "Programs",
    Icon: ProgramsIcon,
    tasks: ["Uninstall a program", "Get programs"],
  },
];

const rightColumn = [
  {
    title: "User Accounts",
    Icon: UsersIcon,
    shielded: true,
    tasks: ["Change account type"],
  },
  {
    title: "Appearance and Personalization",
    Icon: AppearanceIcon,
    tasks: ["Change the theme", "Change desktop background", "Adjust screen resolution"],
  },
  {
    title: "Clock, Language, and Region",
    Icon: ClockIcon,
    tasks: ["Change keyboards or other input methods", "Change display language"],
  },
  {
    title: "Ease of Access",
    Icon: EaseIcon,
    tasks: ["Let Windows suggest settings", "Optimize visual display"],
  },
];

const CategoryColumn = ({ items }) => (
  <div>
    {items.map(({ title, Icon, tasks, shielded }) => (
      <Category key={title} $shielded={shielded}>
        <CategoryIcon>
          <Icon />
        </CategoryIcon>
        <CategoryBody $shielded={shielded}>
          <CategoryTitle>
            <a href="#">{title}</a>
          </CategoryTitle>
          <TaskList>
            {tasks.map((task) => (
              <Task key={task} $shielded={shielded}>
                {shielded && <ShieldSmall />}
                <a href="#">{task}</a>
              </Task>
            ))}
          </TaskList>
        </CategoryBody>
      </Category>
    ))}
  </div>
);

const App = () => (
  <Desktop>
    <GlobalStyle />
    <Defs />
    <Frame>
      <CaptionBar>
        <CaptionButton aria-label="Minimize">
          <svg width="12" height="6" viewBox="0 0 12 6">
            <rect x="1" y="1" width="10" height="4" rx="1" fill="#fff" stroke="#4c5b73" />
          </svg>
        </CaptionButton>
        <CaptionButton aria-label="Restore">
          <svg width="13" height="12" viewBox="0 0 13 12">
            <path d="M4.500.5h8v7h-8z" fill="#fff" stroke="#4c5b73" />
            <path d="M7.500 3.500h2v1h-2z" fill="#8fa5c0" stroke="#4c5b73" />
            <path d="M.5 4.500h8v7h-8z" fill="#fff" stroke="#4c5b73" />
            <path d="M3.500 7.500h2v1h-2z" fill="#8fa5c0" stroke="#4c5b73" />
          </svg>
        </CaptionButton>
        <CaptionButton $close aria-label="Close">
          <svg width="12" height="10" viewBox="0 0 12 10">
            <path d="M2 1.500l8 7M10 1.500l-8 7" stroke="#5a3440" strokeWidth="4" />
            <path d="M2.500 2l7 6M9.500 2l-7 6" stroke="#fff" strokeWidth="2.400" />
          </svg>
        </CaptionButton>
      </CaptionBar>
      <NavRow>
        <RoundButton $gap={2} aria-label="Back">
          <BackGlyph />
        </RoundButton>
        <RoundButton $gap={3} aria-label="Forward">
          <ForwardGlyph />
        </RoundButton>
        <RoundButton $gap={4} aria-label="Recent pages">
          <DownTick color="#2f6590" />
        </RoundButton>
        <AddressBar>
          <BarIcon>
            <PanelGlyph size={17} />
          </BarIcon>
          <RightTick />
          <Crumb href="#">Control Panel</Crumb>
          <RightTick />
          <Spacer />
          <BarButton $w={20} aria-label="Previous locations">
            <DownTick color="#0b0e18" size={7} />
          </BarButton>
          <BarButton $w={25} $divided aria-label="Refresh">
            <RefreshGlyph />
          </BarButton>
        </AddressBar>
        <SearchBox>
          <SearchInput type="text" placeholder="Search Control Panel" aria-label="Search Control Panel" />
          <SearchGlyph />
        </SearchBox>
      </NavRow>
    </Frame>

    <Content>
      <Panel>
        <PanelHead>
          <PanelTitle>Adjust your computer's settings</PanelTitle>
          <ViewBy>
            View by:
            <SelectWrap>
              <Select defaultValue="Category">
                <option>Category</option>
              </Select>
              <DownTick color="#1561a3" />
            </SelectWrap>
          </ViewBy>
        </PanelHead>
        <Columns>
          <CategoryColumn items={leftColumn} />
          <CategoryColumn items={rightColumn} />
        </Columns>
      </Panel>
    </Content>

    <Taskbar>
      <StartButton aria-label="Start">
        <StartOrb />
      </StartButton>
      <TaskButtons>
        <TaskButton aria-label="Internet Explorer">
          <IeIcon />
        </TaskButton>
        <TaskButton aria-label="Windows Explorer">
          <ExplorerIcon />
        </TaskButton>
        <TaskButton aria-label="Media Player">
          <MediaIcon />
        </TaskButton>
        <TaskButton aria-label="Chrome">
          <ChromeIcon />
        </TaskButton>
        <TaskButton $active aria-label="Control Panel">
          <PanelGlyph size={34} />
        </TaskButton>
      </TaskButtons>
      <Tray>
        <TrayButton $gap={4} aria-label="Show hidden icons">
          <svg width="8" height="5" viewBox="0 0 8 5">
            <path d="M0 5h8L4 0z" fill="#f5f8fb" />
          </svg>
        </TrayButton>
        <TrayButton aria-label="Action Center">
          <FlagIcon />
        </TrayButton>
        <TrayButton aria-label="Network">
          <NetTrayIcon />
        </TrayButton>
        <TrayButton aria-label="Volume">
          <SoundIcon />
        </TrayButton>
        <Clock>
          <span>3:23 AM</span>
          <span>9/24/2023</span>
        </Clock>
      </Tray>
      <ShowDesktop aria-label="Show desktop" />
    </Taskbar>

    <Pointer>
      <CursorGlyph />
    </Pointer>
  </Desktop>
);

export default App;
